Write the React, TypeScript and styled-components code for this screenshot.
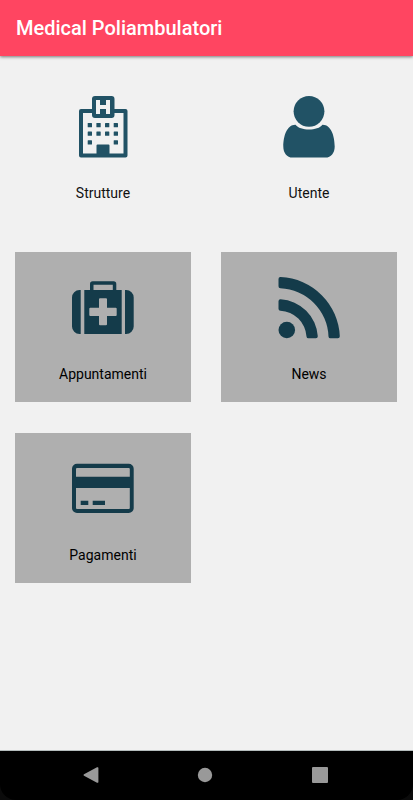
import React from "react";
import styled, { createGlobalStyle } from "styled-components";

const GlobalStyle = createGlobalStyle`
  *, *::before, *::after { box-sizing: border-box; }
  body {
    margin: 0;
    background: #f1f1f1;
    font-family: Roboto, "Liberation Sans", sans-serif;
  }
`;

const Screen = styled.div`
  display: flex;
  flex-direction: column;
  min-height: 100vh;
`;

const AppBar = styled.header`
  display: flex;
  align-items: center;
  height: 56px;
  padding: 0 16px;
  background: #ff4561;
  box-shadow: 0 1px 3px rgba(0, 0, 0, 0.5);
`;

const Title = styled.h1`
  margin: 0;
  font-size: 20px;
  line-height: 24px;
  font-weight: 500;
  color: #fff;
`;

const Menu = styled.main`
  flex: 1;
  display: grid;
  grid-template-columns: 1fr 1fr;
  grid-auto-rows: 150px;
  align-content: start;
  gap: 31px 30px;
  padding: 15px 16px 15px 15px;
`;

const Tile = styled.button<{ $shaded?: boolean }>`
  display: flex;
  flex-direction: column;
  align-items: center;
  gap: 24px;
  padding: 24px 0 0;
  border: 0;
  font-family: inherit;
  color: ${(p) => (p.$shaded ? "#000" : "#111")};
  background: ${(p) => (p.$shaded ? "#afafaf" : "transparent")};

  svg {
    width: 64px;
    height: 64px;
    color: ${(p) => (p.$shaded ? "#143b4a" : "#215265")};
  }
`;

const Label = styled.span`
  font-size: 14px;
  line-height: 20px;
`;

const NavBar = styled.nav`
  background: #0b0b0b;
  border-top: 1px solid #b4bcbc;
`;

const NavKeys = styled.div`
  display: flex;
  height: 49px;
  padding: 0 36px 2px 34px;
  background: #000;
  border-radius: 0 0 16px 16px;
`;

const NavKey = styled.button`
  flex: 1;
  display: flex;
  align-items: center;
  justify-content: center;
  padding: 0;
  border: 0;
  background: none;
  color: #999;

  svg {
    width: 16px;
    height: 16px;
  }
`;

const HospitalIcon = () => (
  <svg viewBox="0 0 64 64" fill="currentColor" aria-hidden="true">
    <path
      fillRule="evenodd"
      d="M10 14h11V4a3 3 0 0 1 3-3h16.500a3 3 0 0 1 3 3v10H54.500a2 2 0 0 1 2 2V60.500a2 2 0 0 1-2 2H10a2 2 0 0 1-2-2V16a2 2 0 0 1 2-2ZM12 18V58.500H25.500V50.500a1 1 0 0 1 1-1h11a1 1 0 0 1 1 1V58.500H52.500V18H43.500v2a3 3 0 0 1-3 3H24a3 3 0 0 1-3-3v-2ZM25 5h4v5h6V5H39v14h-4v-5h-6V19H25Z"
    />
    {[28, 36.500, 45.300].map((y, row) =>
      [16.700, 25.400, 34, 42.700]
        .filter((_, col) => row < 2 || col === 0 || col === 3)
        .map((x) => <rect key={`${x}-${y}`} x={x} y={y} width="4.300" height="4.300" rx="0.500" />)
    )}
  </svg>
);

const UserIcon = () => (
  <svg viewBox="0 0 64 64" fill="currentColor" aria-hidden="true">
    <circle cx="32" cy="16.300" r="15.400" />
    <path d="M18.500 29.700C23 36 41 36 45.500 29.700C54 29.500 57.700 41 57.700 51.500C57.700 58 54 62.600 48.500 62.600H15.500C10 62.600 6.300 58 6.300 51.500C6.300 41 10 29.500 18.500 29.700Z" />
  </svg>
);

const MedkitIcon = () => (
  <svg viewBox="0 0 64 64" fill="currentColor" aria-hidden="true">
    <path d="M9.700 14v44H8.500a7.500 7.500 0 0 1-7.500-7.500v-29A7.500 7.500 0 0 1 8.500 14Z" />
    <path d="M54 14v44h1.200a7.500 7.500 0 0 0 7.500-7.500v-29a7.500 7.500 0 0 0-7.500-7.500Z" />
    <path
      fillRule="evenodd"
      d="M13.300 14H19V8a2.700 2.700 0 0 1 2.700-2.700H42.600A2.700 2.700 0 0 1 45.300 8v6H50.700V58H13.300ZM22.500 8.800V14H41.800V8.800ZM29 22.300a1 1 0 0 0-1 1v8.400h-8.700a1 1 0 0 0-1 1V39a1 1 0 0 0 1 1H28v8.300a1 1 0 0 0 1 1h6a1 1 0 0 0 1-1V40h8.700a1 1 0 0 0 1-1v-6.300a1 1 0 0 0-1-1H36v-8.400a1 1 0 0 0-1-1Z"
    />
  </svg>
);

const FeedIcon = () => (
  <svg viewBox="0 0 64 64" fill="currentColor" aria-hidden="true">
    <circle cx="9.800" cy="54" r="8.300" />
    <path d="M1.500 25.300a2 2 0 0 1 2.100-2A39.500 39.500 0 0 1 40.800 60.300a2 2 0 0 1-2 2H31.500a2 2 0 0 1-2-1.900A27.500 27.500 0 0 0 3.400 34.700a2 2 0 0 1-1.900-2Z" />
    <path d="M1.500 3a2 2 0 0 1 2.100-2A62 62 0 0 1 62.800 60.300a2 2 0 0 1-2 2H53.500a2 2 0 0 1-2-1.900A50 50 0 0 0 3.400 12.300a2 2 0 0 1-1.900-2Z" />
  </svg>
);

const CardIcon = () => (
  <svg viewBox="0 0 64 64" fill="currentColor" aria-hidden="true">
    <path
      fillRule="evenodd"
      d="M6 6.700H57.700a5 5 0 0 1 5 5V51a5 5 0 0 1-5 5H6a5 5 0 0 1-5-5V11.700a5 5 0 0 1 5-5ZM6 11a1 1 0 0 0-1 1v7.700H58.800V12a1 1 0 0 0-1-1ZM5 31V51a1 1 0 0 0 1 1H57.800a1 1 0 0 0 1-1V31Z"
    />
    <path d="M9.700 43.700h7.600V48H9.700ZM21.700 43.700H34V48H21.700Z" />
  </svg>
);

const items = [
  { label: "Strutture", icon: <HospitalIcon />, shaded: false },
  { label: "Utente", icon: <UserIcon />, shaded: false },
  { label: "Appuntamenti", icon: <MedkitIcon />, shaded: true },
  { label: "News", icon: <FeedIcon />, shaded: true },
  { label: "Pagamenti", icon: <CardIcon />, shaded: true },
];

export default function App() {
  return (
    <>
      <GlobalStyle />
      <Screen>
        <AppBar>
          <Title>Medical Poliambulatori</Title>
        </AppBar>
        <Menu>
          {items.map((item) => (
            <Tile key={item.label} type="button" $shaded={item.shaded}>
              {item.icon}
              <Label>{item.label}</Label>
            </Tile>
          ))}
        </Menu>
        <NavBar aria-label="System">
          <NavKeys>
            <NavKey type="button" aria-label="Back">
              <svg viewBox="0 0 16 16" fill="currentColor" aria-hidden="true">
                <path d="M14 0.300a0.900 0.900 0 0 1 1.400 0.700V15a0.900 0.900 0 0 1-1.400 0.700L1 8.700a0.800 0.800 0 0 1 0-1.400Z" />
              </svg>
            </NavKey>
            <NavKey type="button" aria-label="Home">
              <svg viewBox="0 0 16 16" fill="currentColor" aria-hidden="true">
                <circle cx="8" cy="8" r="7.200" />
              </svg>
            </NavKey>
            <NavKey type="button" aria-label="Recent apps">
              <svg viewBox="0 0 16 16" fill="currentColor" aria-hidden="true">
                <rect width="16" height="16" rx="1" />
              </svg>
            </NavKey>
          </NavKeys>
        </NavBar>
      </Screen>
    </>
  );
}
